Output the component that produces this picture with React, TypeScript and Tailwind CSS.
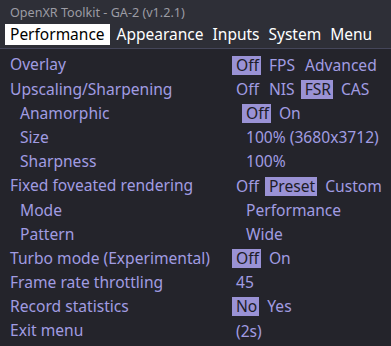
const tabs = ["Performance", "Appearance", "Inputs", "System", "Menu"];

type Row = {
  label: string;
  sub?: boolean;
  options: string[];
  active?: number;
};

const rows: Row[] = [
  { label: "Overlay", options: ["Off", "FPS", "Advanced"], active: 0 },
  { label: "Upscaling/Sharpening", options: ["Off", "NIS", "FSR", "CAS"], active: 2 },
  { label: "Anamorphic", sub: true, options: ["Off", "On"], active: 0 },
  { label: "Size", sub: true, options: ["100% (3680x3712)"] },
  { label: "Sharpness", sub: true, options: ["100%"] },
  { label: "Fixed foveated rendering", options: ["Off", "Preset", "Custom"], active: 1 },
  { label: "Mode", sub: true, options: ["Performance"] },
  { label: "Pattern", sub: true, options: ["Wide"] },
  { label: "Turbo mode (Experimental)", options: ["Off", "On"], active: 0 },
  { label: "Frame rate throttling", options: ["45"] },
  { label: "Record statistics", options: ["No", "Yes"], active: 0 },
  { label: "Exit menu", options: ["(2s)"] },
];

export default function App() {
  return (
    <div
      className="h-[346px] w-[391px] overflow-hidden bg-[#24242b] text-[#a19ce2]"
      style={{ fontFamily: '"Noto Sans", "Open Sans", sans-serif' }}
    >
      <div className="bg-[#2e2f37]">
        <div className="h-[24px] pl-[10px] pt-[5px] text-[12.6px] leading-[16px] text-[#9c9ca4]">
          OpenXR Toolkit - GA-2 (v1.2.1)
        </div>
        <div className="flex h-[24px] items-start gap-[5px] pl-[5px] text-[15.5px] text-white">
          {tabs.map((t, i) => (
            <span
              key={t}
              className={`h-[21px] leading-[21px] ${
                i === 0 ? "bg-white pl-[5px] pr-[5px] text-black" : "px-[2px]"
              }`}
            >
              {t}
            </span>
          ))}
        </div>
        <div className="h-[1px] bg-[#45465a]" />
      </div>
      <div className="pt-[4px] text-[15.6px]">
        {rows.map((r) => (
          <div
            key={r.label}
            className={`flex h-[24.2px] items-center ${r.sub ? "pl-[20px]" : "pl-[10px]"}`}
          >
            <div className="w-[222px] shrink-0 whitespace-nowrap">{r.label}</div>
            <div className="flex items-center gap-[4px] whitespace-nowrap">
              {r.options.map((o, i) => (
                <span
                  key={o}
                  className={`h-[19px] pl-[4px] pr-[2px] leading-[19px] ${
                    r.active === i ? "bg-[#9a92d5] text-[#1d1c27]" : ""
                  }`}
                >
                  {o}
                </span>
              ))}
            </div>
          </div>
        ))}
      </div>
    </div>
  );
}
